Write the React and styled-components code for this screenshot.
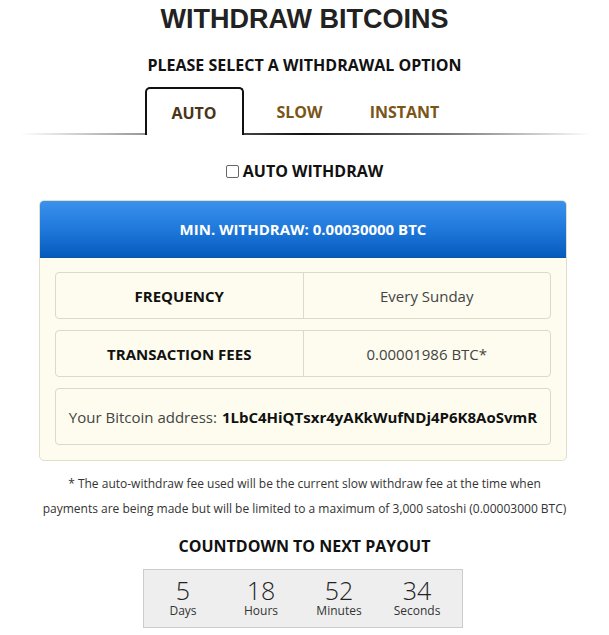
import React from 'react';
import styled, { createGlobalStyle } from 'styled-components';

const GlobalStyle = createGlobalStyle`
  body {
    margin: 0;
    background: #fff;
    font-family: "Open Sans", "Liberation Sans", sans-serif;
    color: #222;
  }
`;

const Page = styled.div`
  width: 609px;
  display: flex;
  flex-direction: column;
  align-items: center;
`;

const Title = styled.h1`
  margin: 4px 0 0;
  font-family: "Liberation Sans", Arial, sans-serif;
  font-size: 27px;
  font-weight: bold;
  line-height: 30px;
  color: #222;
`;

const Subtitle = styled.h3`
  margin: 20px 0 0;
  font-size: 16px;
  font-weight: 700;
  line-height: 22px;
  color: #111;
`;

// underline fades out toward both ends
const TabBar = styled.div`
  position: relative;
  margin-top: 11px;
  width: 570px;
  display: flex;
  padding-left: 125px;
  box-sizing: border-box;
  &::after {
    content: '';
    position: absolute;
    left: 0;
    right: 0;
    bottom: 0;
    height: 2px;
    background: linear-gradient(to right, rgba(0,0,0,0) 0%, #888 25%, #111 50%, #777 75%, rgba(0,0,0,0) 100%);
  }
`;

const Tab = styled.div`
  position: relative;
  z-index: 1;
  box-sizing: border-box;
  width: ${p => p.$w}px;
  height: 48px;
  display: flex;
  align-items: center;
  justify-content: center;
  font-size: 16px;
  font-weight: 700;
  color: ${p => (p.$active ? '#4a3418' : '#7a5518')};
  border: 2px solid ${p => (p.$active ? '#111' : 'transparent')};
  border-bottom: none;
  border-radius: 5px 5px 0 0;
  background: ${p => (p.$active ? '#fff' : 'transparent')};
  padding-top: ${p => (p.$active ? '1px' : '0')};
  padding-bottom: ${p => (p.$active ? '0' : '1px')};
  margin-right: ${p => (p.$active ? '10px' : '0')};
`;

const CheckRow = styled.label`
  margin-top: 25px;
  display: flex;
  align-items: center;
  gap: 4px;
  font-size: 16px;
  font-weight: 700;
  color: #111;
`;

const Box = styled.span`
  width: 11px;
  height: 11px;
  border: 1px solid #666;
  border-radius: 2px;
  background: #fff;
`;

const Panel = styled.div`
  margin-top: 18px;
  margin-right: 3px;
  width: 526px;
  border: 1px solid #e2dfc9;
  border-radius: 5px;
  background: #fdfcee;
  overflow: hidden;
`;

const PanelHead = styled.div`
  height: 56px;
  display: flex;
  align-items: center;
  justify-content: center;
  background: linear-gradient(to bottom, #3b91ec 0%, #1f78dc 50%, #065cbc 100%);
  border-bottom: 1px solid #0a56ad;
  color: #fff;
  font-size: 15px;
  font-weight: 700;
`;

const PanelBody = styled.div`
  padding: 14px 15px 15px;
  display: flex;
  flex-direction: column;
  gap: 11px;
`;

const Row = styled.div`
  display: flex;
  height: ${p => (p.$tall ? '55px' : '45px')};
  border: 1px solid #dcd9c6;
  border-radius: 4px;
  align-items: stretch;
  justify-content: center;
`;

const Cell = styled.div`
  flex: 1;
  display: flex;
  align-items: center;
  justify-content: center;
  font-size: 15px;
  font-weight: ${p => (p.$bold ? 700 : 400)};
  color: ${p => (p.$bold ? '#111' : '#444')};
  & + & {
    border-left: 1px solid #dcd9c6;
  }
`;

const Address = styled.div`
  display: flex;
  align-items: center;
  font-size: 15px;
  color: #444;
  b {
    margin-left: 5px;
    color: #111;
    font-weight: 700;
  }
`;

const Note = styled.p`
  margin: 10px 0 0;
  font-size: 12px;
  line-height: 25px;
  text-align: center;
  color: #333;
`;

const CountTitle = styled.h3`
  margin: 14px 0 0;
  font-size: 16px;
  font-weight: 700;
  line-height: 22px;
  color: #111;
`;

const Countdown = styled.div`
  margin-top: 12px;
  margin-right: 3px;
  width: 312px;
  height: 57px;
  padding-right: 6px;
  box-sizing: content-box;
  background: #eee;
  border: 1px solid #ccc;
  display: flex;
  justify-content: center;
  gap: 4px;
`;

const Unit = styled.div`
  width: 74px;
  display: flex;
  flex-direction: column;
  align-items: center;
  padding-top: 7px;
  color: #222;
  span:first-child {
    font-size: 25px;
    font-weight: 300;
    line-height: 27px;
  }
  span:last-child {
    font-size: 12px;
    line-height: 14px;
    color: #333;
  }
`;

const timer = [
  ['5', 'Days'],
  ['18', 'Hours'],
  ['52', 'Minutes'],
  ['34', 'Seconds'],
];

export default function App() {
  return (
    <>
      <GlobalStyle />
      <Page>
        <Title>WITHDRAW BITCOINS</Title>
        <Subtitle>PLEASE SELECT A WITHDRAWAL OPTION</Subtitle>
        <TabBar>
          <Tab $active $w={99}>AUTO</Tab>
          <Tab $w={92}>SLOW</Tab>
          <Tab $w={118}>INSTANT</Tab>
        </TabBar>
        <CheckRow>
          <Box />
          AUTO WITHDRAW
        </CheckRow>
        <Panel>
          <PanelHead>MIN. WITHDRAW: 0.00030000 BTC</PanelHead>
          <PanelBody>
            <Row>
              <Cell $bold>FREQUENCY</Cell>
              <Cell>Every Sunday</Cell>
            </Row>
            <Row>
              <Cell $bold>TRANSACTION FEES</Cell>
              <Cell>0.00001986 BTC*</Cell>
            </Row>
            <Row $tall>
              <Address>
                Your Bitcoin address: <b>1LbC4HiQTsxr4yAKkWufNDj4P6K8AoSvmR</b>
              </Address>
            </Row>
          </PanelBody>
        </Panel>
        <Note>
          * The auto-withdraw fee used will be the current slow withdraw fee at the time when
          <br />
          payments are being made but will be limited to a maximum of 3,000 satoshi (0.00003000 BTC)
        </Note>
        <CountTitle>COUNTDOWN TO NEXT PAYOUT</CountTitle>
        <Countdown>
          {timer.map(([n, label]) => (
            <Unit key={label}>
              <span>{n}</span>
              <span>{label}</span>
            </Unit>
          ))}
        </Countdown>
      </Page>
    </>
  );
}
